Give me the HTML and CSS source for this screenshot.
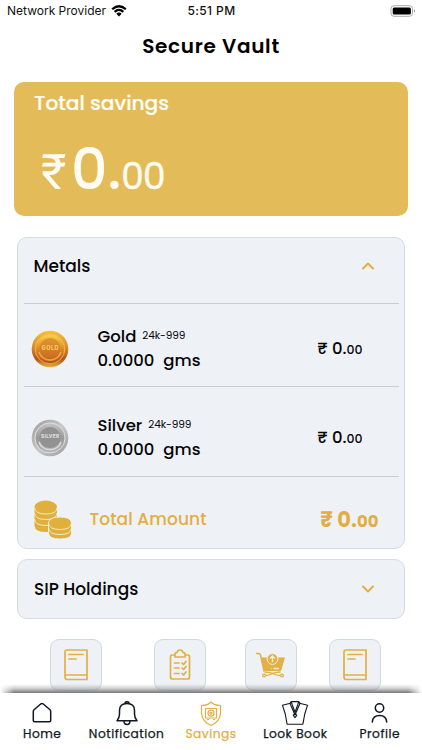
FILE: index.html
```html
<!DOCTYPE html>
<html lang="en">
<head>
<meta charset="utf-8">
<title>Secure Vault</title>
<link rel="stylesheet" href="styles.css">
</head>
<body>
<svg width="0" height="0" class="defs" aria-hidden="true">
  <defs>
    <linearGradient id="goldRim" x1="0" y1="0" x2="0" y2="1"><stop offset="0" stop-color="#f6c33d"/><stop offset=".45" stop-color="#d98a2c"/><stop offset=".78" stop-color="#b4521f"/><stop offset="1" stop-color="#f0b23a"/></linearGradient>
    <linearGradient id="goldFace" x1="0" y1="0" x2="0" y2="1"><stop offset="0" stop-color="#fbd44a"/><stop offset=".5" stop-color="#dc8a2b"/><stop offset="1" stop-color="#b34a1e"/></linearGradient>
    <linearGradient id="silverRim" x1="0" y1="0" x2="1" y2="1"><stop offset="0" stop-color="#9b9b9b"/><stop offset=".5" stop-color="#c9c9c9"/><stop offset="1" stop-color="#989898"/></linearGradient>
    <linearGradient id="silverFace" x1="0" y1="0" x2="0" y2="1"><stop offset="0" stop-color="#c4c4c4"/><stop offset=".5" stop-color="#999"/><stop offset="1" stop-color="#b5b5b5"/></linearGradient>
    <symbol id="book" viewBox="0 0 26 34"><path d="M4 2H24V31.500H4.500Q2 31.500 2 29V4Q2 2 4 2ZM2.500 27H24M6 6.500H20M6 11H13" fill="none" stroke="#e2b044" stroke-width="1.700" stroke-linecap="round" stroke-linejoin="round"/></symbol>
  </defs>
</svg>
<div class="screen">
  <header class="status">
    <div class="carrier"><span class="provider">Network Provider</span>
      <svg width="16" height="12" viewBox="0 0 16 12"><path d="M1.200 4.300Q8-1.800 14.800 4.300M3.600 6.900Q8 3 12.400 6.900" fill="none" stroke="#000" stroke-width="2.200"/><path d="M5.300 8.700Q8 6.500 10.700 8.700L8 11.500Z"/></svg>
    </div>
    <span class="time">5:51 PM</span>
    <svg class="battery" width="26" height="12" viewBox="0 0 26 12"><rect x="1" y=".7" width="21.500" height="10.600" rx="3" fill="none" stroke="#aaa"/><rect x="2.700" y="2.400" width="18.200" height="7.200" rx="1.500"/><path d="M24 4.300Q26 6 24 7.700Z" fill="#999"/></svg>
  </header>
  <h1 class="title">Secure Vault</h1>

  <section class="savings">
    <div class="savings-label">Total savings</div>
    <div class="savings-value"><span class="big-rupee">₹</span><span class="big-whole">0.</span><span class="big-cents">00</span></div>
  </section>

  <section class="panel metals">
    <div class="panel-head"><span class="head-metals">Metals</span>
      <svg width="14" height="10" viewBox="0 0 14 10"><path d="M2 7.500L7 2.500L12 7.500" class="chevron"/></svg>
    </div>
    <div class="metal gold">
      <svg class="coin" width="38" height="38" viewBox="0 0 38 38"><circle cx="19" cy="19" r="18.300" fill="url(#goldRim)"/><circle cx="19" cy="19" r="14.800" fill="url(#goldFace)" stroke="#f5c443" stroke-width=".8"/><path d="M8 22A11.500 11.500 0 0 0 30 22" fill="none" stroke="#eba73a" stroke-width="1.800"/><circle cx="19" cy="18.500" r="10.500" fill="#cf7527" opacity=".55"/><text x="19" y="19.700" class="coin-text gold-text" textLength="17">GOLD</text></svg>
      <div class="info"><div class="name"><span class="n-gold">Gold</span><small>24k-999</small></div><div class="qty">0.0000<span>gms</span></div></div>
      <div class="price">₹ 0.<small>00</small></div>
    </div>
    <div class="metal silver">
      <svg class="coin" width="38" height="38" viewBox="0 0 38 38"><circle cx="19" cy="19" r="18.300" fill="url(#silverRim)"/><circle cx="19" cy="19" r="15" fill="url(#silverFace)" stroke="#dfdfdf" stroke-width="1"/><path d="M8 23A11.700 11.700 0 0 0 30 23" fill="none" stroke="#d7d7d7" stroke-width="1.800"/><circle cx="19" cy="18.500" r="10.500" fill="#929292"/><text x="19" y="19.200" class="coin-text silver-text" textLength="18">SILVER</text></svg>
      <div class="info"><div class="name"><span class="n-silver">Silver</span><small>24k-999</small></div><div class="qty">0.0000<span>gms</span></div></div>
      <div class="price">₹ 0.<small>00</small></div>
    </div>
    <div class="total">
      <svg class="stack" width="38" height="40" viewBox="0 0 38 40"><g fill="#e0b03d"><path d="M.5 7V26Q1 32 12 32Q23 32 23 26V7Z"/><ellipse cx="11.750" cy="7" rx="11.250" ry="6.500"/></g><path d="M.5 7.500Q1 14 12 14Q23 14 23 7.500M.5 13Q1 19.500 12 19.500Q23 19.500 23 13M.5 19Q1 25.500 12 25.500Q19 25.500 23 22" fill="none" stroke="#f5edd0" stroke-width=".9"/><path d="M14.500 23V33Q15 39 26 39Q37.500 39 37.500 33V23Q37 17 26 17Q15 17 14.500 23Z" fill="#e0b03d" stroke="#eef2f6" stroke-width=".9"/><path d="M14.500 23Q15 29.500 26 29.500Q37 29.500 37.500 23M14.500 28Q15 34.500 26 34.500Q37 34.500 37.500 28" fill="none" stroke="#f5edd0" stroke-width=".9"/></svg>
      <span class="total-label">Total Amount</span>
      <span class="total-price">₹ 0.<small>00</small></span>
    </div>
  </section>

  <section class="panel sip">
    <div class="panel-head"><span class="head-sip">SIP Holdings</span>
      <svg width="14" height="10" viewBox="0 0 14 10"><path d="M2 2.500L7 7.500L12 2.500" class="chevron"/></svg>
    </div>
  </section>

  <div class="tiles">
    <div class="tile"><svg width="26" height="34"><use href="#book"/></svg></div>
    <div class="tile"><svg width="24" height="34" viewBox="0 0 24 34" fill="none" stroke="#e2b044" stroke-width="1.700" stroke-linejoin="round" stroke-linecap="round"><path d="M7 7H4Q2.500 7 2.500 8.500V29Q2.500 31 4.500 31H19.500Q21.500 31 21.500 29V8.500Q21.500 7 20 7H17M7 9H17V6Q17 4.500 15 4.500Q14.500 2 12 2Q9.500 2 9 4.500Q7 4.500 7 6ZM6.500 15H11M6.500 20H11M6.500 25.500H11M14 15L15.500 16.500L18 13.500M14 20L15.500 21.500L18 18.500M14 25.500L15.500 27L18 24"/></svg></div>
    <div class="tile"><svg class="cart" width="32" height="28" viewBox="0 0 32 28"><path d="M1.500 2.500H3.500Q5 2.500 5.500 4L9 20" fill="none" stroke="#e2b044" stroke-width="1.500" stroke-linecap="round"/><path d="M6 6.500H30L26.500 18.500Q26 20 24 20H11Q9 20 8.500 18.500Z" fill="#e2b044"/><circle cx="17.500" cy="8" r="5.400" fill="#e2b044" stroke="#f2efe2" stroke-width="1"/><path d="M17.500 11V5.300M15 7.500L17.500 5L20 7.500M18.500 17.500H24M16 17.500H16.500" fill="none" stroke="#f5efd8" stroke-width="1.300"/><path d="M9.500 24.500Q14 24.500 17.500 22.500Q21 21 25.500 21M9.500 21Q14 21 17.500 22.500Q21 24.500 25.500 24.500" fill="none" stroke="#e2b044" stroke-width="1.400"/><circle cx="9" cy="24.500" r="1.400" fill="#eef2f6" stroke="#e2b044" stroke-width="1.200"/><circle cx="27" cy="24.500" r="1.400" fill="#eef2f6" stroke="#e2b044" stroke-width="1.200"/></svg></div>
    <div class="tile"><svg width="26" height="34"><use href="#book"/></svg></div>
  </div>

  <nav class="nav">
    <div class="shade"></div>
    <div class="item home"><svg width="22" height="26" viewBox="0 0 22 26"><path d="M2.300 10.500Q2.300 9.500 3 8.800L10 2.800Q11 2 12 2.800L19 8.800Q19.700 9.500 19.700 10.500V19.500Q19.700 20.700 18.500 20.700H3.500Q2.300 20.700 2.300 19.500Z" class="line"/></svg><span>Home</span></div>
    <div class="item notification"><svg width="24" height="26" viewBox="0 0 24 26"><path d="M2 19.800Q4.500 17 4.500 13V9.500Q4.500 2.500 12 2.500Q19.500 2.500 19.500 9.500V13Q19.500 17 22 19.800ZM10 2.300Q10 .8 12 .8Q14 .8 14 2.300M9 20Q9 23.500 12 23.500Q15 23.500 15 20" class="line"/></svg><span>Notification</span></div>
    <div class="item savings-tab"><svg width="22" height="26" viewBox="0 0 22 26" fill="none" stroke="#e2ae42" stroke-width="1.200" stroke-linejoin="round"><path d="M11 1Q14 4.500 20.500 4.500V12Q20 20.500 11 24.500Q2 20.500 1.500 12V4.500Q8 4.500 11 1Z"/><rect x="5.500" y="7.500" width="11" height="9.500"/><circle cx="11" cy="12.200" r="3"/><circle cx="11" cy="12.200" r="1"/><path d="M7 18.500H9M13 18.500H15"/></svg><span>Savings</span></div>
    <div class="item look"><svg width="30" height="28" viewBox="0 0 30 28" fill="none" stroke="#111722" stroke-width="1.200" stroke-linejoin="round"><path d="M10 2.500L1.500 4.500L4.500 14L6.500 25H23.500L25.500 14L28.500 4.500L20 2.500M11 .7H19M10 4V1.500L11 .7L12 4M20 4V1.500L19 .7L18 4"/><path d="M10 3.500L15 15L20 3.500M12 4L15 12L18 4"/><path d="M15 13L16.800 15.500L15 18L13.200 15.500Z"/></svg><span>Look Book</span></div>
    <div class="item profile"><svg width="20" height="26" viewBox="0 0 20 26"><circle cx="9.500" cy="7" r="4.200" class="line"/><path d="M2.300 21Q2.800 14.500 9.500 14.500Q16.200 14.500 16.700 21" class="line"/></svg><span>Profile</span></div>
  </nav>
</div>
</body>
</html>
```
FILE: styles.css
```css
* { box-sizing: border-box; }
body { margin: 0; background: #fff; font-family: Poppins, Inter, sans-serif; color: #050507; overflow: hidden; }
.defs { display: block; width: 0; height: 0; }
.screen { width: 422px; height: 750px; display: flex; flex-direction: column; white-space: nowrap; overflow: hidden; }
svg { display: block; flex: none; }
small { font-size: inherit; }

.status { height: 22px; flex: none; display: grid; grid-template-columns: 1fr auto 1fr; align-items: center; padding: 0 6px 0 7px; font-family: Inter, sans-serif; font-size: 12px; line-height: 22px; color: #111; }
.carrier { display: flex; align-items: center; gap: 5px; }
.time { font-weight: 500; letter-spacing: 0.400px; }
.battery { justify-self: end; }

.title { margin: 0; height: 48px; flex: none; line-height: 48px; text-align: center; font-size: 20px; font-weight: 600; letter-spacing: 0.700px; color: #000; }

.savings { flex: none; height: 134px; margin: 12px 14px 0; border-radius: 10px; background: #e4bb59; color: #fffdf2; padding: 8px 20px; }
.savings-label { height: 28px; line-height: 27px; font-size: 20.200px; font-weight: 500; -webkit-text-stroke: 0.200px #fffdf2; }
.savings-value { display: flex; align-items: baseline; margin-top: 17px; padding-left: 7px; line-height: 68px; height: 68px; }
.big-rupee { font-family: Roboto, sans-serif; font-size: 49px; width: 30px; }
.big-whole { font-size: 57px; font-weight: 500; }
.big-cents { font-size: 36px; font-weight: 400; letter-spacing: -1px; -webkit-text-stroke: 0.400px #fffdf2; }

.panel { flex: none; margin: 21px 17px 0; border: 1px solid #d8dbe3; border-radius: 10px; background: #eef1f6; }
.metals { height: 312px; padding: 0 5.500px; }
.panel-head { display: flex; justify-content: space-between; align-items: center; font-size: 17px; font-weight: 500; }
.metals .panel-head { height: 66px; padding: 0 24px 9px 10px; border-bottom: 1px solid #c9ccd4; }
.chevron { fill: none; stroke: #e2ae42; stroke-width: 2; stroke-linecap: round; stroke-linejoin: round; }
.metal { display: flex; border-bottom: 1px solid #c9ccd4; font-weight: 500; }
.gold { height: 83px; padding: 21px 36px 0 7px; }
.silver { height: 90px; padding: 27px 36px 0 7px; }
.coin { margin-top: 5px; }
.coin-text { font-family: Inter, sans-serif; font-weight: 800; text-anchor: middle; }
.gold-text { font-size: 5.500px; fill: #f9ce58; }
.silver-text { font-size: 4.700px; fill: #dedede; }
.info { margin-left: 29px; flex: 1; }
.name, .qty { height: 24px; line-height: 24px; font-size: 16.500px; }
.name { display: flex; }
.name small { font-size: 10.500px; font-weight: 400; line-height: 22px; margin-left: 6px; letter-spacing: -0.100px; }
.qty span { margin-left: 9px; }
.price { margin-top: 12px; height: 24px; line-height: 24px; font-size: 16.500px; }
.price small { font-size: 12.500px; }
.total { display: flex; align-items: center; height: 71px; padding: 13px 20px 0 10px; color: #e2ae42; }
.stack { margin-top: 1px; }
.total-label { margin-left: 18px; flex: 1; font-size: 17px; font-weight: 500; letter-spacing: 0.100px; }
.total-price { font-size: 21px; font-weight: 700; }
.total-price small { font-size: 16.500px; }
.sip { height: 60px; margin-top: 10px; }
.sip .panel-head { height: 58px; padding: 0 29px 0 16px; }

.tiles { flex: none; display: grid; grid-template-columns: 104px 91px 84px 52px; margin: 20px 0 0 50px; }
.tile { width: 52px; height: 52px; border: 1px solid #d3d7e0; border-radius: 9px; background: #eef1f6; display: flex; align-items: center; justify-content: center; }
.cart { margin-bottom: 1px; }

.nav { position: relative; flex: none; height: 57px; margin-top: 2px; background: #fff; display: grid; grid-template-columns: repeat(5, 84.400px); padding-top: 8px; }
.shade { position: absolute; left: 0; right: 0; top: -9px; height: 9px; background: linear-gradient(#77777700, #7777774d 45%, #777777); mask-image: linear-gradient(90deg, transparent, #000 14px, #000 calc(100% - 14px), transparent); }
.item { display: flex; flex-direction: column; align-items: center; font-size: 12.200px; font-weight: 400; letter-spacing: 0.500px; line-height: 14px; color: #111722; -webkit-text-stroke: 0.250px; }
.item svg { height: 26px; }
.line { fill: none; stroke: #111722; stroke-width: 1.500; stroke-linecap: round; stroke-linejoin: round; }
.savings-tab { color: #e2ae42; }
```
